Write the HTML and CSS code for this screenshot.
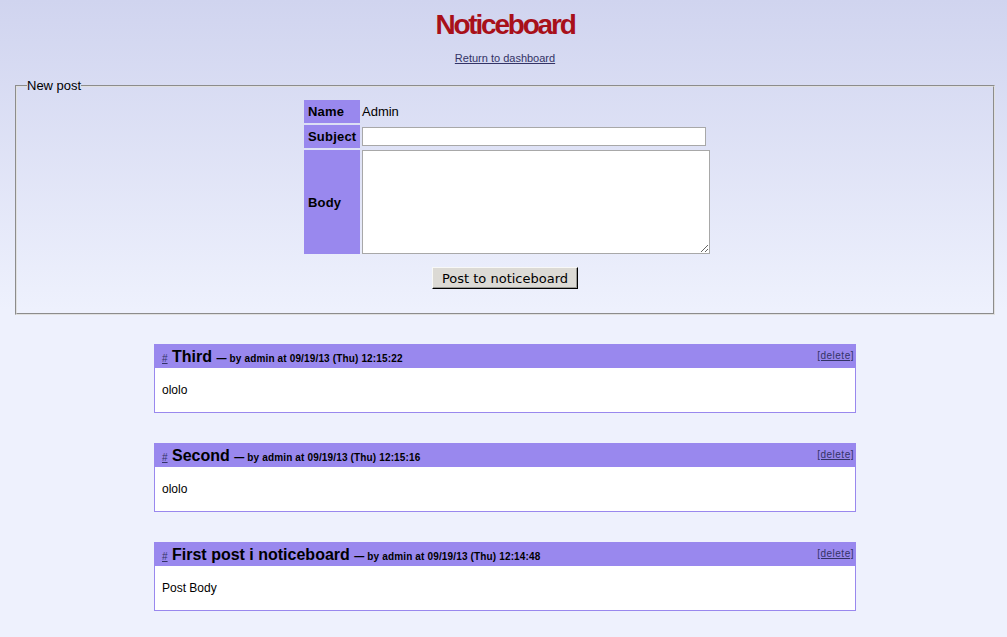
FILE: index.html
```html
<!DOCTYPE html>
<html>
<head>
<meta charset="utf-8">
<title>Noticeboard</title>
<link rel="stylesheet" href="styles.css">
</head>
<body>
<div class="page">
  <h1 class="title">Noticeboard</h1>
  <div class="back"><a href="#">Return to dashboard</a></div>

  <fieldset class="newpost">
    <legend>New post</legend>
    <table class="form">
      <tr>
        <th>Name</th>
        <td class="name">Admin</td>
      </tr>
      <tr>
        <th>Subject</th>
        <td><input type="text" class="subject"></td>
      </tr>
      <tr>
        <th>Body</th>
        <td><textarea class="body"></textarea></td>
      </tr>
    </table>
    <div class="submit"><button type="button">Post to noticeboard</button></div>
  </fieldset>

  <div class="posts">
    <div class="post">
      <div class="post-head">
        <div class="head-left"><a href="#" class="anchor">#</a> <span class="post-title">Third</span> <span class="meta">— by admin at 09/19/13 (Thu) 12:15:22</span></div>
        <a href="#" class="del">[delete]</a>
      </div>
      <div class="post-body">ololo</div>
    </div>
    <div class="post">
      <div class="post-head">
        <div class="head-left"><a href="#" class="anchor">#</a> <span class="post-title">Second</span> <span class="meta">— by admin at 09/19/13 (Thu) 12:15:16</span></div>
        <a href="#" class="del">[delete]</a>
      </div>
      <div class="post-body">ololo</div>
    </div>
    <div class="post">
      <div class="post-head">
        <div class="head-left"><a href="#" class="anchor">#</a> <span class="post-title">First post i noticeboard</span> <span class="meta">— by admin at 09/19/13 (Thu) 12:14:48</span></div>
        <a href="#" class="del">[delete]</a>
      </div>
      <div class="post-body">Post Body</div>
    </div>
  </div>
</div>
</body>
</html>
```

FILE: styles.css
```css
html {
  background: #eef1fd;
}
body {
  margin: 0;
  min-height: 637px;
  font-family: "Liberation Sans", Arial, sans-serif;
  color: #000;
  background: linear-gradient(to bottom, #d0d4ef 0px, #eef1fd 310px, #eef1fd 100%) no-repeat;
}
.page {
  padding: 9px 12px 20px 15px;
}
.title {
  margin: 0;
  text-align: center;
  font-size: 28px;
  line-height: 32px;
  font-weight: bold;
  letter-spacing: -2.2px;
  color: #a8101a;
}
.back {
  text-align: center;
  font-size: 11px;
  line-height: 14px;
  margin-top: 10px;
}
.back a {
  color: #333366;
}
.newpost {
  margin: 13px 0 0 0;
  padding: 5px 10px 23px 10px;
  border: 2px groove #e0e0e0;
}
.newpost legend {
  font-size: 13px;
  padding: 0;
  margin-left: 0;
}
.form {
  margin: 0 auto;
  border-spacing: 2px;
  position: relative;
  left: 2px;
}
.form th {
  background: #9988ee;
  text-align: left;
  font-size: 13px;
  font-weight: bold;
  letter-spacing: 0.2px;
  padding: 0 3px 0 4px;
  width: 49px;
}
.form tr:first-child th,
.form tr:first-child td {
  height: 23px;
}
.form tr:nth-child(2) th,
.form tr:nth-child(2) td {
  height: 23px;
}
.form td {
  padding: 0;
  vertical-align: middle;
}
.name {
  font-size: 13px;
}
.subject {
  display: block;
  width: 344px;
  height: 19px;
  box-sizing: border-box;
  margin: 0;
  border: 1px solid #a8a8a8;
  background: #fff;
}
.body {
  display: block;
  width: 348px;
  height: 104px;
  box-sizing: border-box;
  margin: 0;
  border: 1px solid #a8a8a8;
  background: #fff;
  resize: both;
}
.submit {
  text-align: center;
  margin-top: 11px;
}
.submit button {
  font-family: "DejaVu Sans", sans-serif;
  font-size: 13px;
  height: 22px;
  width: 146px;
  padding: 0;
  background: #dcdad5;
  color: #000;
  border: 1px solid;
  border-color: #f8f8f6 #000 #000 #f8f8f6;
  box-shadow: inset -1px -1px 0 #9a9a96;
  margin: 0 0 1px 0;
}
.posts {
  display: flex;
  flex-direction: column;
  align-items: center;
  gap: 30px;
  margin-top: 29px;
}
.post {
  width: 700px;
  border: 1px solid #9988ee;
  background: #fff;
}
.post-head {
  background: #9988ee;
  height: 23px;
  display: flex;
  align-items: center;
  justify-content: space-between;
  padding: 0 1px 0 7px;
}
.head-left {
  padding-top: 1px;
  white-space: nowrap;
}
.anchor {
  font-size: 10px;
  color: #333366;
}
.post-title {
  font-size: 16px;
  font-weight: bold;
}
.meta {
  font-size: 10px;
  font-weight: bold;
  letter-spacing: 0.15px;
}
.del {
  font-size: 10px;
  letter-spacing: 0.5px;
  color: #333366;
  align-self: flex-start;
  margin-top: 5px;
}
.post-body {
  height: 44px;
  display: flex;
  align-items: center;
  padding-left: 7px;
  font-size: 12px;
}
```
